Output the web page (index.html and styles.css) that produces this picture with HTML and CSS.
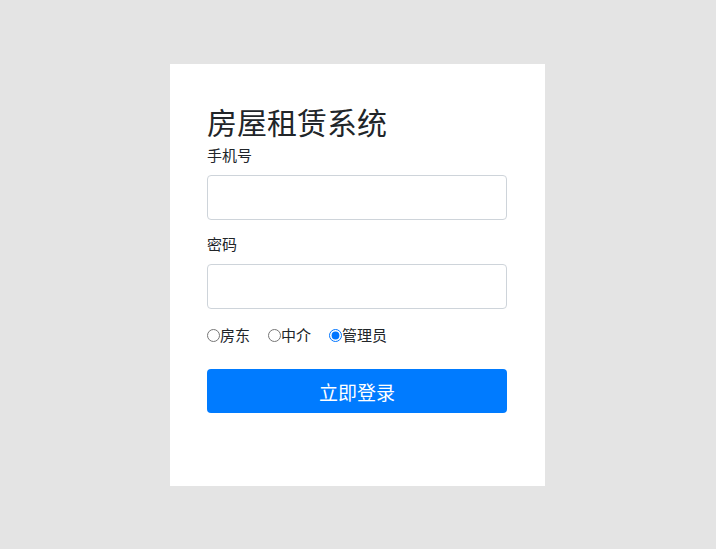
FILE: index.html
```html
<!DOCTYPE html>
<html lang="zh">
<head>
<meta charset="utf-8">
<title>房屋租赁系统</title>
<link rel="stylesheet" href="styles.css">
</head>
<body>
<div class="card">
  <h1 class="title">房屋租赁系统</h1>
  <label class="label">手机号</label>
  <input class="input" type="text">
  <label class="label">密码</label>
  <input class="input" type="password">
  <div class="roles">
    <label class="role"><input type="radio" name="role">房东</label>
    <label class="role"><input type="radio" name="role">中介</label>
    <label class="role"><input type="radio" name="role" checked>管理员</label>
  </div>
  <button class="btn">立即登录</button>
</div>
</body>
</html>
```
FILE: styles.css
```css
html, body {
  margin: 0;
  padding: 0;
  background: #e4e4e4;
  font-family: "Noto Sans CJK SC", "Liberation Sans", sans-serif;
  color: #212529;
}
.card {
  width: 300px;
  margin: 64px 0 0 170px;
  background: #fff;
  padding: 37px 38px 73px 37px;
  display: flex;
  flex-direction: column;
}
.title {
  margin: 0 0 4px 0;
  font-size: 30px;
  font-weight: 400;
  line-height: 40px;
}
.label {
  font-size: 15px;
  line-height: 20px;
  margin-bottom: 10px;
}
.input {
  box-sizing: border-box;
  height: 45px;
  width: 300px;
  border: 1px solid #ced4da;
  border-radius: 4px;
  margin: 0 0 14px 0;
}
.roles {
  display: flex;
  gap: 18px;
  font-size: 15px;
  line-height: 20px;
  margin: 2px 0 24px 0;
}
.role {
  display: flex;
  align-items: center;
}
.role input {
  margin: 0;
  width: 13px;
  height: 13px;
}
.btn {
  height: 44px;
  width: 300px;
  border: none;
  border-radius: 4px;
  background: #007bff;
  color: #fff;
  font-family: inherit;
  font-size: 19px;
}
```
